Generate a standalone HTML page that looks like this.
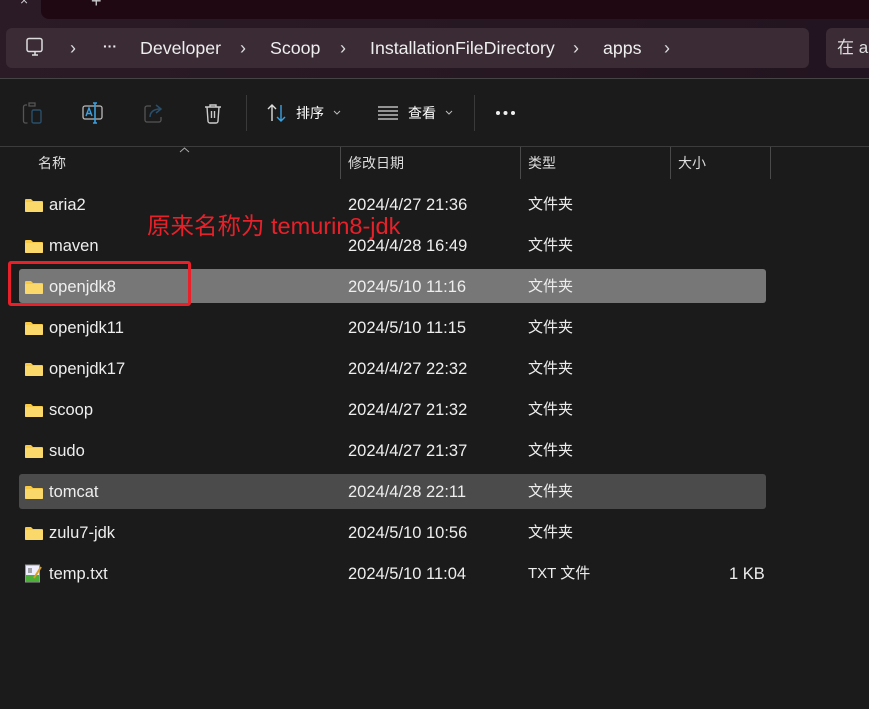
<!DOCTYPE html>
<html><head><meta charset="utf-8"><style>
*{margin:0;padding:0;box-sizing:border-box}
body{width:869px;height:709px;overflow:hidden;background:#1b1b1b;font-family:"Liberation Sans","Noto Sans CJK SC",sans-serif;color:#fff;position:relative}
.top{position:absolute;left:0;top:0;width:869px;height:78px;background:linear-gradient(90deg,#2a1b26,#261722 60%,#221420)}
.tabs{position:absolute;left:41px;top:0;width:828px;height:19px;background:#1f0812;border-radius:0 0 0 8px}
.addr{position:absolute;left:6px;top:28px;width:803px;height:40px;background:#3a2b35;border-radius:6px}
.search{position:absolute;left:826px;top:28px;width:60px;height:40px;background:#3a2b35;border-radius:6px;font-size:17px;color:#ddd;padding:9px 0 0 11px;line-height:22px}
.crumb{position:absolute;top:28px;line-height:40px;font-size:17.8px;color:#eee}
.sep{position:absolute;top:28px;line-height:40px;font-size:18px;color:#ddd}
.line{position:absolute;left:0;top:78px;width:869px;height:1px;background:#444}
.tb{position:absolute;font-size:14px;color:#fff;top:103px;line-height:20px}
.vdiv{position:absolute;top:95px;width:1px;height:36px;background:#3a3a3a}
.hdrline{position:absolute;left:0;top:146px;width:869px;height:1px;background:#3c3c3c}
.h{position:absolute;top:153px;font-size:14px;color:#ddd;line-height:20px}
.cd{position:absolute;top:147px;width:1px;height:32px;background:#4a4a4a}
.row{position:absolute;left:0;width:869px;height:34px;font-size:16.5px;color:#eee}
.row span{position:absolute;top:0;line-height:34px}
.row span.t{font-size:15px}
.n{left:49px}.d{left:348px}.t{left:528px}.s{left:730px}
.fold{position:absolute;left:25px;top:11px;width:18px;height:13px}
.sel{position:absolute;left:19px;width:747px;border-radius:3px}
</style></head><body>
<div class="top"></div>
<div class="tabs"></div>
<div style="position:absolute;left:20px;top:-8px;color:#ccc;font-size:14px">×</div>
<div style="position:absolute;left:91px;top:-9px;color:#ccc;font-size:18px">+</div>
<div class="addr"></div>
<svg style="position:absolute;left:25px;top:37px" width="20" height="21" viewBox="0 0 20 21"><rect x="2" y="1.5" width="15" height="13" rx="2" fill="none" stroke="#ddd" stroke-width="1.5"/><path d="M7 18h6M10 15v3" stroke="#ddd" stroke-width="1.5"/></svg>
<div class="sep" style="left:70px">›</div>
<div class="crumb" style="left:103px;top:26px;font-size:14px;font-weight:bold">···</div>
<div class="crumb" style="left:140px">Developer</div>
<div class="sep" style="left:240px">›</div>
<div class="crumb" style="left:270px">Scoop</div>
<div class="sep" style="left:340px">›</div>
<div class="crumb" style="left:370px">InstallationFileDirectory</div>
<div class="sep" style="left:573px">›</div>
<div class="crumb" style="left:603px">apps</div>
<div class="sep" style="left:664px">›</div>
<div class="search">在 a</div>
<div class="line"></div>
<svg style="position:absolute;left:22px;top:101px" width="22" height="24" viewBox="0 0 22 24"><path d="M5 4h-1.5a2 2 0 0 0-2 2v14a2 2 0 0 0 2 2h2M7 2h6v3h-6z" fill="none" stroke="#555" stroke-width="1.3"/><rect x="10" y="9" width="9" height="13" rx="1.5" fill="none" stroke="#2a4f6a" stroke-width="1.4"/></svg>
<svg style="position:absolute;left:82px;top:101px" width="22" height="24" viewBox="0 0 22 24"><rect x="1" y="5" width="19" height="13" rx="2" fill="none" stroke="#bbb" stroke-width="1.3"/><path d="M4 15l3-8 3 8M5 12.5h4" fill="none" stroke="#3ba0e0" stroke-width="1.4"/><path d="M13 2v20M11 2h4M11 22h4" stroke="#3ba0e0" stroke-width="1.6"/></svg>
<svg style="position:absolute;left:143px;top:102px" width="22" height="22" viewBox="0 0 22 22"><path d="M8 4h-4a2 2 0 0 0-2 2v12a2 2 0 0 0 2 2h12a2 2 0 0 0 2-2v-3" fill="none" stroke="#555" stroke-width="1.3"/><path d="M7 15c0-5 4-8 10-8M13 3l5 4-5 4" fill="none" stroke="#2a4f6a" stroke-width="1.5"/></svg>
<svg style="position:absolute;left:203px;top:102px" width="20" height="22" viewBox="0 0 20 22"><path d="M2 5h16M7 5v-2h6v2M4 5l1 14a2 2 0 0 0 2 2h6a2 2 0 0 0 2-2l1-14M8.5 9v7M11.5 9v7" fill="none" stroke="#ccc" stroke-width="1.4"/></svg>
<div class="vdiv" style="left:246px"></div>
<svg style="position:absolute;left:266px;top:103px" width="22" height="20" viewBox="0 0 22 20"><path d="M6 18V2M2 6l4-4 4 4" fill="none" stroke="#ddd" stroke-width="1.4"/><path d="M15 2v16M11 14l4 4 4-4" fill="none" stroke="#3ba0e0" stroke-width="1.4"/></svg>
<div class="tb" style="left:296px">排序</div>
<svg style="position:absolute;left:333px;top:110px" width="8" height="5" viewBox="0 0 8 5"><path d="M1 1l3 3 3-3" fill="none" stroke="#bbb"/></svg>
<svg style="position:absolute;left:377px;top:105px" width="22" height="16" viewBox="0 0 22 16"><path d="M1 2h20M1 6h20M1 10h20M1 14h20" stroke="#ddd" stroke-width="1.3"/></svg>
<div class="tb" style="left:408px">查看</div>
<svg style="position:absolute;left:445px;top:110px" width="8" height="5" viewBox="0 0 8 5"><path d="M1 1l3 3 3-3" fill="none" stroke="#bbb"/></svg>
<div class="vdiv" style="left:474px"></div>
<svg style="position:absolute;left:495px;top:110px" width="22" height="6" viewBox="0 0 22 6"><circle cx="3" cy="3" r="2" fill="#eee"/><circle cx="10.5" cy="3" r="2" fill="#eee"/><circle cx="18" cy="3" r="2" fill="#eee"/></svg>
<div class="hdrline"></div>
<svg style="position:absolute;left:179px;top:147px" width="11" height="6" viewBox="0 0 11 6"><path d="M1 5l4.5-4 4.5 4" fill="none" stroke="#aaa"/></svg>
<div class="h" style="left:38px">名称</div>
<div class="cd" style="left:340px"></div><div class="h" style="left:348px">修改日期</div>
<div class="cd" style="left:520px"></div><div class="h" style="left:528px">类型</div>
<div class="cd" style="left:670px"></div><div class="h" style="left:678px">大小</div>
<div class="cd" style="left:770px"></div>

<div class="sel" style="top:269px;height:34px;background:#777"></div>
<div class="sel" style="top:474px;height:35px;background:#4b4b4b"></div>

<div class="row" style="top:188px"><svg class="fold" viewBox="0 0 18 13"><path d="M0 1a1 1 0 0 1 1-1h5l2 2h9a1 1 0 0 1 1 1v9a1 1 0 0 1-1 1H1a1 1 0 0 1-1-1z" fill="#f8c945"/><rect y="3" width="18" height="10" rx="1" fill="#fbd86a"/></svg><span class="n">aria2</span><span class="d">2024/4/27 21:36</span><span class="t">文件夹</span></div>
<div class="row" style="top:229px"><svg class="fold" viewBox="0 0 18 13"><path d="M0 1a1 1 0 0 1 1-1h5l2 2h9a1 1 0 0 1 1 1v9a1 1 0 0 1-1 1H1a1 1 0 0 1-1-1z" fill="#f8c945"/><rect y="3" width="18" height="10" rx="1" fill="#fbd86a"/></svg><span class="n">maven</span><span class="d">2024/4/28 16:49</span><span class="t">文件夹</span></div>
<div class="row" style="top:270px"><svg class="fold" viewBox="0 0 18 13"><path d="M0 1a1 1 0 0 1 1-1h5l2 2h9a1 1 0 0 1 1 1v9a1 1 0 0 1-1 1H1a1 1 0 0 1-1-1z" fill="#f8c945"/><rect y="3" width="18" height="10" rx="1" fill="#fbd86a"/></svg><span class="n">openjdk8</span><span class="d">2024/5/10 11:16</span><span class="t">文件夹</span></div>
<div class="row" style="top:311px"><svg class="fold" viewBox="0 0 18 13"><path d="M0 1a1 1 0 0 1 1-1h5l2 2h9a1 1 0 0 1 1 1v9a1 1 0 0 1-1 1H1a1 1 0 0 1-1-1z" fill="#f8c945"/><rect y="3" width="18" height="10" rx="1" fill="#fbd86a"/></svg><span class="n">openjdk11</span><span class="d">2024/5/10 11:15</span><span class="t">文件夹</span></div>
<div class="row" style="top:352px"><svg class="fold" viewBox="0 0 18 13"><path d="M0 1a1 1 0 0 1 1-1h5l2 2h9a1 1 0 0 1 1 1v9a1 1 0 0 1-1 1H1a1 1 0 0 1-1-1z" fill="#f8c945"/><rect y="3" width="18" height="10" rx="1" fill="#fbd86a"/></svg><span class="n">openjdk17</span><span class="d">2024/4/27 22:32</span><span class="t">文件夹</span></div>
<div class="row" style="top:393px"><svg class="fold" viewBox="0 0 18 13"><path d="M0 1a1 1 0 0 1 1-1h5l2 2h9a1 1 0 0 1 1 1v9a1 1 0 0 1-1 1H1a1 1 0 0 1-1-1z" fill="#f8c945"/><rect y="3" width="18" height="10" rx="1" fill="#fbd86a"/></svg><span class="n">scoop</span><span class="d">2024/4/27 21:32</span><span class="t">文件夹</span></div>
<div class="row" style="top:434px"><svg class="fold" viewBox="0 0 18 13"><path d="M0 1a1 1 0 0 1 1-1h5l2 2h9a1 1 0 0 1 1 1v9a1 1 0 0 1-1 1H1a1 1 0 0 1-1-1z" fill="#f8c945"/><rect y="3" width="18" height="10" rx="1" fill="#fbd86a"/></svg><span class="n">sudo</span><span class="d">2024/4/27 21:37</span><span class="t">文件夹</span></div>
<div class="row" style="top:475px"><svg class="fold" viewBox="0 0 18 13"><path d="M0 1a1 1 0 0 1 1-1h5l2 2h9a1 1 0 0 1 1 1v9a1 1 0 0 1-1 1H1a1 1 0 0 1-1-1z" fill="#f8c945"/><rect y="3" width="18" height="10" rx="1" fill="#fbd86a"/></svg><span class="n">tomcat</span><span class="d">2024/4/28 22:11</span><span class="t">文件夹</span></div>
<div class="row" style="top:516px"><svg class="fold" viewBox="0 0 18 13"><path d="M0 1a1 1 0 0 1 1-1h5l2 2h9a1 1 0 0 1 1 1v9a1 1 0 0 1-1 1H1a1 1 0 0 1-1-1z" fill="#f8c945"/><rect y="3" width="18" height="10" rx="1" fill="#fbd86a"/></svg><span class="n">zulu7-jdk</span><span class="d">2024/5/10 10:56</span><span class="t">文件夹</span></div>
<div class="row" style="top:557px"><svg style="position:absolute;left:25px;top:7px" width="17" height="19" viewBox="0 0 17 19"><rect x="0.5" y="1" width="14" height="17" fill="#eef" stroke="#999"/><rect x="1" y="11" width="13" height="7" fill="#4caf3a"/><path d="M4 4v5M6 4v5" stroke="#555"/><path d="M9 14l7-11" stroke="#d9a020" stroke-width="2"/></svg><span class="n">temp.txt</span><span class="d">2024/5/10 11:04</span><span class="t">TXT 文件</span><span style="left:729px">1 KB</span></div>

<div style="position:absolute;left:147px;top:211px;font-size:23.5px;line-height:30px;color:#e8202a;white-space:nowrap">原来名称为 temurin8-jdk</div>
<div style="position:absolute;left:8px;top:261px;width:183px;height:45px;border:3px solid #e8202a;border-radius:3px"></div>
</body></html>
